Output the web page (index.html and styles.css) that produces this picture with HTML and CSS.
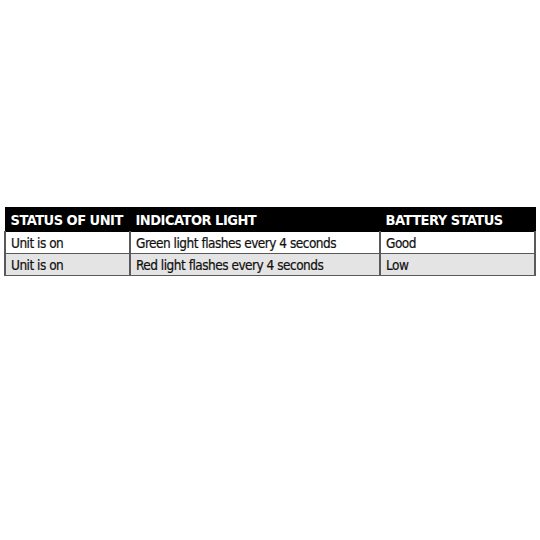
FILE: index.html
```html
<!DOCTYPE html>
<html>
<head>
<meta charset="utf-8">
<link rel="stylesheet" href="styles.css">
</head>
<body>
<div class="page">
<table class="status-table">
  <colgroup><col class="c1"><col class="c2"><col class="c3"></colgroup>
  <thead>
    <tr><th>STATUS OF UNIT</th><th>INDICATOR LIGHT</th><th>BATTERY STATUS</th></tr>
  </thead>
  <tbody>
    <tr class="row-a"><td>Unit is on</td><td>Green light flashes every 4 seconds</td><td>Good</td></tr>
    <tr class="row-b"><td>Unit is on</td><td>Red light flashes every 4 seconds</td><td>Low</td></tr>
  </tbody>
</table>
</div>
</body>
</html>
```
FILE: styles.css
```css
html, body { margin: 0; padding: 0; background: #fff; }
.page { padding: 207px 5px 0 4px; }
.status-table {
  width: 530px;
  table-layout: fixed;
  border-collapse: collapse;
  font-family: "Liberation Sans Narrow", "DejaVu Sans Condensed", "Liberation Sans", sans-serif;
  color: #111;
}
.c1 { width: 125px; }
.c2 { width: 250px; }
.c3 { width: 155px; }
.status-table th {
  background: #000;
  color: #fff;
  font-weight: bold;
  font-size: 14.5px;
  letter-spacing: -0.5px;
  white-space: nowrap;
  text-align: left;
  height: 23px;
  padding: 0 0 0 5px;
  border: 1px solid #000;
}
.status-table td {
  font-size: 13.5px;
  letter-spacing: -0.5px;
  white-space: nowrap;
  height: 21px;
  padding: 0 0 0 5px;
  border: 1px solid #5a5a5a;
  border-width: 1px 2px;
  -webkit-text-stroke: 0.2px #111;
}
.row-a td { background: #fff; }
.row-b td { background: #e4e4e4; }
```
